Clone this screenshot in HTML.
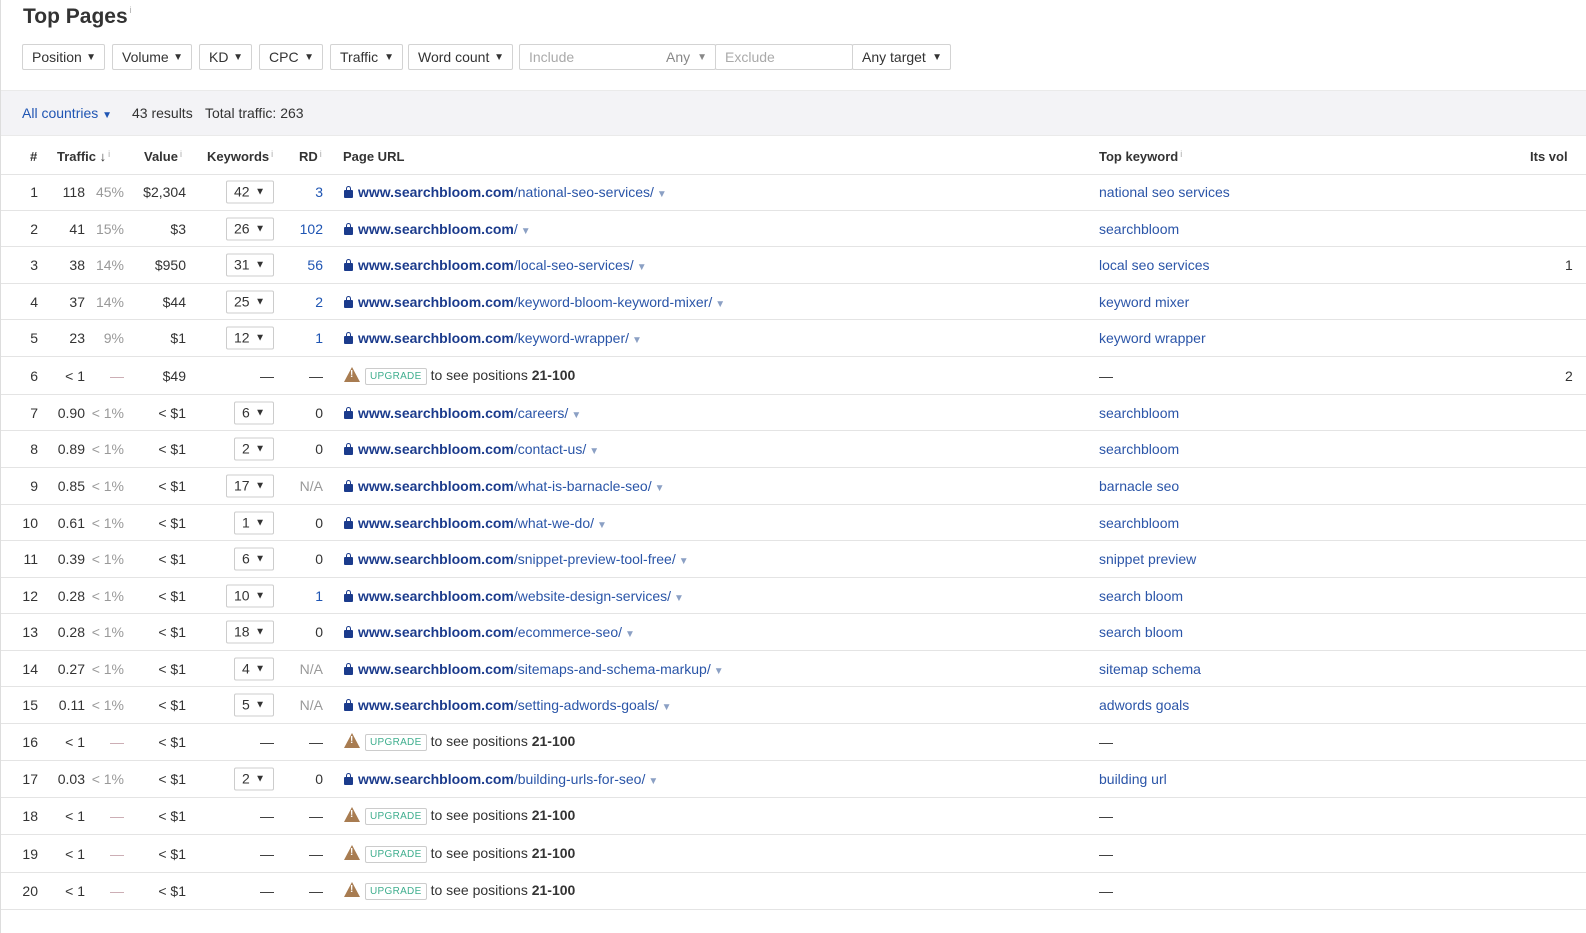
<!DOCTYPE html>
<html><head><meta charset="utf-8"><style>
*{margin:0;padding:0;box-sizing:border-box}
body{width:1586px;height:933px;overflow:hidden;background:#fff;font-family:"Liberation Sans",Arial,sans-serif;font-size:14px;color:#333;position:relative}
i{font-style:normal}
.lb{position:absolute;left:0;top:0;width:1px;height:933px;background:#ddd}
h1{position:absolute;left:23px;top:5px;font-size:21px;font-weight:bold;color:#333}
h1 sup,.i{font-size:9px;color:#aaa;font-weight:normal;vertical-align:top;margin-left:2px;font-style:normal}
.f{position:absolute;top:44px;height:26px;border:1px solid #d3d3d3;border-radius:2px;line-height:24px;padding-left:9px;color:#333;font-size:14px;background:#fff}
.f b{position:absolute;right:8px;top:1px;font-size:10px;font-weight:normal}
.ph{color:#aaa}
.band{position:absolute;left:1px;top:90px;width:1585px;height:46px;background:#f3f3f6;border-top:1px solid #eaeaea;border-bottom:1px solid #eaeaea}
.band span{position:absolute;top:14px}
.hd{position:absolute;top:137px;left:1px;width:1585px;height:38px;border-bottom:1px solid #e4e4e4;font-weight:bold;font-size:13px;color:#333}
.hd span,.r span{position:absolute;white-space:nowrap}
.hd span{top:12px}
.r{position:absolute;left:1px;width:1585px;border-bottom:1px solid #e4e4e4}
.r span{top:50%;transform:translateY(-50%)}
.rt{text-align:right}
.pc{color:#999}
.kb{border:1px solid #ccc;border-radius:2px;width:48px;height:23px;line-height:21px;padding-left:7px;color:#333}
.kb::after{content:"▼";position:absolute;right:8px;font-size:10px}
.bl{color:#1f55b3}
.u{color:#2a55a8}
.u b{color:#1b3b8c}
.u em{font-style:normal;color:#8ba0c4;font-size:10px;margin-left:3px}
.lk{display:inline-block;width:9px;height:8px;background:#1b3b8c;border-radius:1px;position:relative;margin-right:5px;vertical-align:-1px}
.lk::before{content:"";position:absolute;left:2px;top:-4px;width:3px;height:4px;border:1.5px solid #1b3b8c;border-bottom:none;border-radius:3px 3px 0 0}
.kw{color:#2b55a8}
.up{display:inline-block;border:1px solid #ccc;border-radius:2px;color:#3fae8e;font-size:10px;padding:0 4px;height:17px;line-height:15px;margin:0 4px 0 5px;vertical-align:1px;letter-spacing:.3px;font-style:normal}
.wr{display:inline-block;width:0;height:0;border-left:8px solid transparent;border-right:8px solid transparent;border-bottom:15px solid #a87c51;vertical-align:-2px;position:relative}
.wr::after{content:"!";position:absolute;left:-2px;top:2px;color:#fff;font-size:10px;font-weight:bold;font-style:normal}
.dsh{color:#c8a8b0}
</style></head><body>
<div class="lb"></div>
<h1>Top Pages<sup>i</sup></h1>
<div class="f" style="left:22px;width:83px">Position<b>▼</b></div>
<div class="f" style="left:112px;width:80px">Volume<b>▼</b></div>
<div class="f" style="left:199px;width:53px">KD<b>▼</b></div>
<div class="f" style="left:259px;width:64px">CPC<b>▼</b></div>
<div class="f" style="left:330px;width:73px">Traffic<b>▼</b></div>
<div class="f" style="left:408px;width:105px">Word count<b>▼</b></div>
<div class="f ph" style="left:519px;width:197px">Include<span style="position:absolute;left:146px;color:#888">Any</span><b style="color:#888">▼</b></div>
<div class="f ph" style="left:715px;width:138px">Exclude</div>
<div class="f" style="left:852px;width:99px">Any target<b>▼</b></div>
<div class="band"><span class="bl" style="left:21px">All countries <span style="position:static;font-size:10px">▼</span></span><span style="left:131px">43 results</span><span style="left:204px">Total traffic: 263</span></div>
<div class="hd">
<span style="left:29px">#</span>
<span style="left:56px">Traffic ↓<i class="i">i</i></span>
<span style="left:143px">Value<i class="i">i</i></span>
<span style="left:206px">Keywords<i class="i">i</i></span>
<span style="left:298px">RD<i class="i">i</i></span>
<span style="left:342px">Page URL</span>
<span style="left:1098px">Top keyword<i class="i">i</i></span>
<span style="left:1529px">Its vol</span>
</div>

<div class="r" style="top:174px;height:37px"><span class="rt" style="right:1548px">1</span><span class="rt" style="right:1501px">118</span><span class="rt pc" style="right:1462px">45%</span><span class="rt" style="right:1400px">$2,304</span><span class="kb" style="left:225px">42</span><span class="rt bl" style="right:1263px">3</span><span class="u" style="left:343px"><i class="lk"></i><b>www.searchbloom.com</b>/national-seo-services/<em>▼</em></span><span class="kw" style="left:1098px">national seo services</span></div>
<div class="r" style="top:211px;height:36px"><span class="rt" style="right:1548px">2</span><span class="rt" style="right:1501px">41</span><span class="rt pc" style="right:1462px">15%</span><span class="rt" style="right:1400px">$3</span><span class="kb" style="left:225px">26</span><span class="rt bl" style="right:1263px">102</span><span class="u" style="left:343px"><i class="lk"></i><b>www.searchbloom.com</b>/<em>▼</em></span><span class="kw" style="left:1098px">searchbloom</span></div>
<div class="r" style="top:247px;height:37px"><span class="rt" style="right:1548px">3</span><span class="rt" style="right:1501px">38</span><span class="rt pc" style="right:1462px">14%</span><span class="rt" style="right:1400px">$950</span><span class="kb" style="left:225px">31</span><span class="rt bl" style="right:1263px">56</span><span class="u" style="left:343px"><i class="lk"></i><b>www.searchbloom.com</b>/local-seo-services/<em>▼</em></span><span class="kw" style="left:1098px">local seo services</span><span style="left:1564px">1</span></div>
<div class="r" style="top:284px;height:36px"><span class="rt" style="right:1548px">4</span><span class="rt" style="right:1501px">37</span><span class="rt pc" style="right:1462px">14%</span><span class="rt" style="right:1400px">$44</span><span class="kb" style="left:225px">25</span><span class="rt bl" style="right:1263px">2</span><span class="u" style="left:343px"><i class="lk"></i><b>www.searchbloom.com</b>/keyword-bloom-keyword-mixer/<em>▼</em></span><span class="kw" style="left:1098px">keyword mixer</span></div>
<div class="r" style="top:320px;height:37px"><span class="rt" style="right:1548px">5</span><span class="rt" style="right:1501px">23</span><span class="rt pc" style="right:1462px">9%</span><span class="rt" style="right:1400px">$1</span><span class="kb" style="left:225px">12</span><span class="rt bl" style="right:1263px">1</span><span class="u" style="left:343px"><i class="lk"></i><b>www.searchbloom.com</b>/keyword-wrapper/<em>▼</em></span><span class="kw" style="left:1098px">keyword wrapper</span></div>
<div class="r" style="top:357px;height:38px"><span class="rt" style="right:1548px">6</span><span class="rt" style="right:1501px">&lt; 1</span><span class="rt dsh" style="right:1462px">—</span><span class="rt" style="right:1400px">$49</span><span class="rt" style="right:1312px">—</span><span class="rt" style="right:1263px">—</span><span style="left:343px"><i class="wr"></i><i class="up">UPGRADE</i>to see positions <b>21-100</b></span><span style="left:1098px">—</span><span style="left:1564px">2</span></div>
<div class="r" style="top:395px;height:36px"><span class="rt" style="right:1548px">7</span><span class="rt" style="right:1501px">0.90</span><span class="rt pc" style="right:1462px">&lt; 1%</span><span class="rt" style="right:1400px">&lt; $1</span><span class="kb" style="left:233px;width:40px">6</span><span class="rt" style="right:1263px">0</span><span class="u" style="left:343px"><i class="lk"></i><b>www.searchbloom.com</b>/careers/<em>▼</em></span><span class="kw" style="left:1098px">searchbloom</span></div>
<div class="r" style="top:431px;height:37px"><span class="rt" style="right:1548px">8</span><span class="rt" style="right:1501px">0.89</span><span class="rt pc" style="right:1462px">&lt; 1%</span><span class="rt" style="right:1400px">&lt; $1</span><span class="kb" style="left:233px;width:40px">2</span><span class="rt" style="right:1263px">0</span><span class="u" style="left:343px"><i class="lk"></i><b>www.searchbloom.com</b>/contact-us/<em>▼</em></span><span class="kw" style="left:1098px">searchbloom</span></div>
<div class="r" style="top:468px;height:37px"><span class="rt" style="right:1548px">9</span><span class="rt" style="right:1501px">0.85</span><span class="rt pc" style="right:1462px">&lt; 1%</span><span class="rt" style="right:1400px">&lt; $1</span><span class="kb" style="left:225px">17</span><span class="rt pc" style="right:1263px">N/A</span><span class="u" style="left:343px"><i class="lk"></i><b>www.searchbloom.com</b>/what-is-barnacle-seo/<em>▼</em></span><span class="kw" style="left:1098px">barnacle seo</span></div>
<div class="r" style="top:505px;height:36px"><span class="rt" style="right:1548px">10</span><span class="rt" style="right:1501px">0.61</span><span class="rt pc" style="right:1462px">&lt; 1%</span><span class="rt" style="right:1400px">&lt; $1</span><span class="kb" style="left:233px;width:40px">1</span><span class="rt" style="right:1263px">0</span><span class="u" style="left:343px"><i class="lk"></i><b>www.searchbloom.com</b>/what-we-do/<em>▼</em></span><span class="kw" style="left:1098px">searchbloom</span></div>
<div class="r" style="top:541px;height:37px"><span class="rt" style="right:1548px">11</span><span class="rt" style="right:1501px">0.39</span><span class="rt pc" style="right:1462px">&lt; 1%</span><span class="rt" style="right:1400px">&lt; $1</span><span class="kb" style="left:233px;width:40px">6</span><span class="rt" style="right:1263px">0</span><span class="u" style="left:343px"><i class="lk"></i><b>www.searchbloom.com</b>/snippet-preview-tool-free/<em>▼</em></span><span class="kw" style="left:1098px">snippet preview</span></div>
<div class="r" style="top:578px;height:36px"><span class="rt" style="right:1548px">12</span><span class="rt" style="right:1501px">0.28</span><span class="rt pc" style="right:1462px">&lt; 1%</span><span class="rt" style="right:1400px">&lt; $1</span><span class="kb" style="left:225px">10</span><span class="rt bl" style="right:1263px">1</span><span class="u" style="left:343px"><i class="lk"></i><b>www.searchbloom.com</b>/website-design-services/<em>▼</em></span><span class="kw" style="left:1098px">search bloom</span></div>
<div class="r" style="top:614px;height:37px"><span class="rt" style="right:1548px">13</span><span class="rt" style="right:1501px">0.28</span><span class="rt pc" style="right:1462px">&lt; 1%</span><span class="rt" style="right:1400px">&lt; $1</span><span class="kb" style="left:225px">18</span><span class="rt" style="right:1263px">0</span><span class="u" style="left:343px"><i class="lk"></i><b>www.searchbloom.com</b>/ecommerce-seo/<em>▼</em></span><span class="kw" style="left:1098px">search bloom</span></div>
<div class="r" style="top:651px;height:36px"><span class="rt" style="right:1548px">14</span><span class="rt" style="right:1501px">0.27</span><span class="rt pc" style="right:1462px">&lt; 1%</span><span class="rt" style="right:1400px">&lt; $1</span><span class="kb" style="left:233px;width:40px">4</span><span class="rt pc" style="right:1263px">N/A</span><span class="u" style="left:343px"><i class="lk"></i><b>www.searchbloom.com</b>/sitemaps-and-schema-markup/<em>▼</em></span><span class="kw" style="left:1098px">sitemap schema</span></div>
<div class="r" style="top:687px;height:37px"><span class="rt" style="right:1548px">15</span><span class="rt" style="right:1501px">0.11</span><span class="rt pc" style="right:1462px">&lt; 1%</span><span class="rt" style="right:1400px">&lt; $1</span><span class="kb" style="left:233px;width:40px">5</span><span class="rt pc" style="right:1263px">N/A</span><span class="u" style="left:343px"><i class="lk"></i><b>www.searchbloom.com</b>/setting-adwords-goals/<em>▼</em></span><span class="kw" style="left:1098px">adwords goals</span></div>
<div class="r" style="top:724px;height:37px"><span class="rt" style="right:1548px">16</span><span class="rt" style="right:1501px">&lt; 1</span><span class="rt dsh" style="right:1462px">—</span><span class="rt" style="right:1400px">&lt; $1</span><span class="rt" style="right:1312px">—</span><span class="rt" style="right:1263px">—</span><span style="left:343px"><i class="wr"></i><i class="up">UPGRADE</i>to see positions <b>21-100</b></span><span style="left:1098px">—</span></div>
<div class="r" style="top:761px;height:37px"><span class="rt" style="right:1548px">17</span><span class="rt" style="right:1501px">0.03</span><span class="rt pc" style="right:1462px">&lt; 1%</span><span class="rt" style="right:1400px">&lt; $1</span><span class="kb" style="left:233px;width:40px">2</span><span class="rt" style="right:1263px">0</span><span class="u" style="left:343px"><i class="lk"></i><b>www.searchbloom.com</b>/building-urls-for-seo/<em>▼</em></span><span class="kw" style="left:1098px">building url</span></div>
<div class="r" style="top:798px;height:37px"><span class="rt" style="right:1548px">18</span><span class="rt" style="right:1501px">&lt; 1</span><span class="rt dsh" style="right:1462px">—</span><span class="rt" style="right:1400px">&lt; $1</span><span class="rt" style="right:1312px">—</span><span class="rt" style="right:1263px">—</span><span style="left:343px"><i class="wr"></i><i class="up">UPGRADE</i>to see positions <b>21-100</b></span><span style="left:1098px">—</span></div>
<div class="r" style="top:835px;height:38px"><span class="rt" style="right:1548px">19</span><span class="rt" style="right:1501px">&lt; 1</span><span class="rt dsh" style="right:1462px">—</span><span class="rt" style="right:1400px">&lt; $1</span><span class="rt" style="right:1312px">—</span><span class="rt" style="right:1263px">—</span><span style="left:343px"><i class="wr"></i><i class="up">UPGRADE</i>to see positions <b>21-100</b></span><span style="left:1098px">—</span></div>
<div class="r" style="top:873px;height:37px"><span class="rt" style="right:1548px">20</span><span class="rt" style="right:1501px">&lt; 1</span><span class="rt dsh" style="right:1462px">—</span><span class="rt" style="right:1400px">&lt; $1</span><span class="rt" style="right:1312px">—</span><span class="rt" style="right:1263px">—</span><span style="left:343px"><i class="wr"></i><i class="up">UPGRADE</i>to see positions <b>21-100</b></span><span style="left:1098px">—</span></div>
</body></html>
